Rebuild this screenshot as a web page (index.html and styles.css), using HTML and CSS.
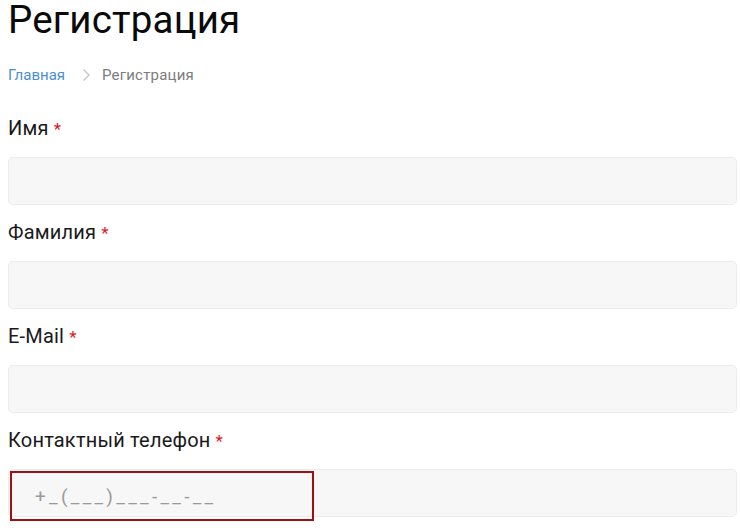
FILE: index.html
```html
<!DOCTYPE html>
<html lang="ru">
<head>
<meta charset="utf-8">
<title>Регистрация</title>
<link rel="stylesheet" href="styles.css">
</head>
<body>
<div class="page">
  <h1 class="title">Регистрация</h1>
  <nav class="crumbs">
    <a class="crumb-link" href="#">Главная</a>
    <svg class="crumb-sep" width="10" height="14" viewBox="0 0 10 14"><path d="M2.5 1.5 L8 7 L2.5 12.5" fill="none" stroke="#c4c4c4" stroke-width="1.3"/></svg>
    <span class="crumb-current">Регистрация</span>
  </nav>
  <form class="form">
    <div class="field">
      <label class="label">Имя <span class="req">*</span></label>
      <div class="input"></div>
    </div>
    <div class="field">
      <label class="label">Фамилия <span class="req">*</span></label>
      <div class="input"></div>
    </div>
    <div class="field">
      <label class="label">E-Mail <span class="req">*</span></label>
      <div class="input"></div>
    </div>
    <div class="field">
      <label class="label">Контактный телефон <span class="req">*</span></label>
      <div class="input input-phone">
        <div class="phone-mask">+_(___)___-__-__</div>
      </div>
    </div>
  </form>
</div>
</body>
</html>
```
FILE: styles.css
```css
html, body {
  margin: 0;
  padding: 0;
  background: #ffffff;
}
body {
  font-family: Roboto, "Noto Sans", Arial, sans-serif;
  color: #111111;
}
.page {
  padding: 2px 3px 0 8px;
}
.title {
  margin: 0;
  font-size: 38.5px;
  line-height: 36px;
  font-weight: 400;
  letter-spacing: 0.2px;
  color: #0a0a0a;
}
.crumbs {
  margin-top: 27px;
  display: flex;
  align-items: center;
  font-size: 15px;
  line-height: 20px;
}
.crumb-link {
  color: #4a8fd6;
  text-decoration: none;
}
.crumb-sep {
  margin: 0 11px 0 16px;
}
.crumb-current {
  color: #7d7d7d;
  letter-spacing: 0.2px;
}
.form {
  margin-top: 29px;
}
.field {
  margin-bottom: 13px;
}
.label {
  display: flex;
  align-items: baseline;
  gap: 5px;
  font-size: 20px;
  line-height: 28px;
  height: 28px;
  letter-spacing: 0.2px;
  margin-bottom: 15px;
  color: #1a1a1a;
}
.req {
  color: #e0161c;
  font-size: 17px;
  line-height: 1;
}
.input {
  position: relative;
  height: 46px;
  background: #f7f7f7;
  border: 1px solid #ececec;
  border-radius: 5px;
}
.phone-mask {
  position: absolute;
  left: 1px;
  top: 1px;
  width: 277px;
  height: 46px;
  border: 2px solid #a60e0e;
  padding-left: 23px;
  display: flex;
  align-items: center;
  font-size: 19px;
  letter-spacing: 3.3px;
  color: #9a9a9a;
}
```
